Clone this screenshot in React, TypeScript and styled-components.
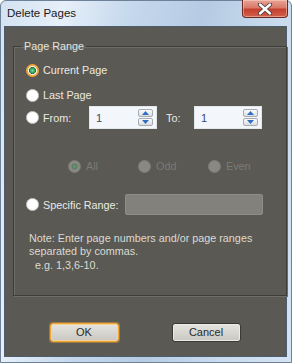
import { createGlobalStyle } from 'styled-components';
import styled from 'styled-components';

const GlobalStyle = createGlobalStyle`
  html, body {
    margin: 0;
    padding: 0;
    background: #ffffff;
  }
  #root {
    width: 292px;
    height: 363px;
  }
  * {
    box-sizing: border-box;
  }
`;

const App = () => {
  return (
    <Window>
      <GlobalStyle />
      <TitleBar>
        <Title>Delete Pages</Title>
        <CloseButton>
          <svg width="16" height="12" viewBox="0 0 16 12">
            <path d="M3 1.5 L13 10.5 M13 1.5 L3 10.5" stroke="#4a3a38" strokeWidth="4.2" strokeLinecap="round" />
            <path d="M3 1.5 L13 10.5 M13 1.5 L3 10.5" stroke="#ffffff" strokeWidth="2.4" strokeLinecap="round" />
          </svg>
        </CloseButton>
      </TitleBar>
      <Client>
        <Group>
          <Legend>Page Range</Legend>
          <Row $mt={9}>
            <Radio $checked $focus />
            <Label>Current Page</Label>
          </Row>
          <Row $mt={9}>
            <Radio />
            <Label>Last Page</Label>
          </Row>
          <FieldRow $mt={3}>
            <Radio />
            <Label $w={46}>From:</Label>
            <Spinner value="1" />
            <Label $w={28} $ml={9}>To:</Label>
            <Spinner value="1" />
          </FieldRow>
          <SubRow>
            <SubOption>
              <Radio $checked $disabled />
              <DimLabel>All</DimLabel>
            </SubOption>
            <SubOption>
              <Radio $disabled />
              <DimLabel>Odd</DimLabel>
            </SubOption>
            <SubOption>
              <Radio $disabled />
              <DimLabel>Even</DimLabel>
            </SubOption>
          </SubRow>
          <FieldRow $mt={19}>
            <Radio />
            <Label $w={82}>Specific Range:</Label>
            <RangeBox />
          </FieldRow>
          <Note>
            Note: Enter page numbers and/or page ranges
            <br />
            separated by commas.
            <br />
            &nbsp;&nbsp;e.g. 1,3,6-10.
          </Note>
        </Group>
        <ButtonRow>
          <Button $default>OK</Button>
          <Button>Cancel</Button>
        </ButtonRow>
      </Client>
    </Window>
  );
};

const Spinner = ({ value }: { value: string }) => (
  <SpinBox>
    <SpinValue>{value}</SpinValue>
    <SpinButtons>
      <SpinButton>
        <svg width="7" height="4" viewBox="0 0 7 4">
          <path d="M0 4 L3.5 0 L7 4 Z" fill="#2f6fc4" />
        </svg>
      </SpinButton>
      <SpinButton>
        <svg width="7" height="4" viewBox="0 0 7 4">
          <path d="M0 0 L3.5 4 L7 0 Z" fill="#2f6fc4" />
        </svg>
      </SpinButton>
    </SpinButtons>
  </SpinBox>
);

export default App;

const Window = styled.div`
  width: 292px;
  height: 363px;
  display: flex;
  flex-direction: column;
  border: 1px solid #6d8198;
  border-radius: 6px 6px 0 0;
  padding: 0 4px 5px 3px;
  background: linear-gradient(100deg, #d3e2f2 0%, #e6eff9 18%, #c4d7ec 38%, #b6cbe3 58%, #c9dbee 80%, #d4e3f3 100%);
  font-family: 'Liberation Sans', Arial, sans-serif;
`;

const TitleBar = styled.div`
  height: 25px;
  display: flex;
  align-items: flex-start;
  justify-content: space-between;
  flex-shrink: 0;
`;

const Title = styled.div`
  padding: 5px 0 0 3px;
  font-family: 'Liberation Sans', Arial, sans-serif;
  font-size: 11.5px;
  line-height: 15px;
  color: #1a1a1a;
`;

const CloseButton = styled.div`
  width: 46px;
  height: 18px;
  margin-top: -1px;
  margin-right: -1px;
  display: flex;
  align-items: center;
  justify-content: center;
  border: 1px solid #6a2a22;
  border-top: none;
  border-radius: 0 0 4px 4px;
  background: linear-gradient(#e9a595 0%, #d9796a 45%, #c4402f 55%, #d2614b 100%);
  box-shadow: inset 0 0 0 1px rgba(255, 220, 210, 0.45);
`;

const Client = styled.div`
  flex: 1;
  display: flex;
  flex-direction: column;
  border: 1px solid #4d5c6c;
  background: #5a5953;
  padding: 0 4px 0 8px;
`;

const Group = styled.fieldset`
  margin: 13px 0 0 0;
  padding: 0 8px 23px 12px;
  border: 1px solid #3e3d39;
  box-shadow: inset 1px 1px 0 #6e6d67, 1px 1px 0 #6e6d67;
  display: flex;
  flex-direction: column;
`;

const Legend = styled.legend`
  margin-left: -4px;
  padding: 0 2px;
  font-size: 10.8px;
  line-height: 13px;
  color: #e6e4dc;
`;

const Row = styled.div<{ $mt?: number }>`
  height: 16px;
  margin-top: ${(p) => p.$mt ?? 0}px;
  display: flex;
  align-items: center;
`;

const FieldRow = styled.div<{ $mt?: number }>`
  height: 23px;
  margin-top: ${(p) => p.$mt ?? 0}px;
  display: flex;
  align-items: center;
`;

const Radio = styled.span<{ $checked?: boolean; $disabled?: boolean; $focus?: boolean }>`
  width: 13px;
  height: 13px;
  flex-shrink: 0;
  border-radius: 50%;
  border: ${(p) => (p.$focus ? '2px solid #f2a43a' : p.$disabled ? '1px solid #7d7c77' : '1px solid #cfcfcf')};
  background: ${(p) =>
    p.$disabled
      ? p.$checked
        ? 'radial-gradient(circle, #6f9a7a 0, #52805f 2.5px, #7e8a80 3.2px, #8a8984 4px)'
        : '#898883'
      : p.$checked
      ? 'radial-gradient(circle, #79d99a 0, #2e9d56 2.6px, #1e6b3b 3.2px, #ffffff 3.8px)'
      : 'radial-gradient(circle at 50% 40%, #ffffff 55%, #ececec 100%)'};
`;

const Label = styled.span<{ $w?: number; $ml?: number }>`
  margin-left: ${(p) => p.$ml ?? 4}px;
  ${(p) => (p.$w ? `width: ${p.$w}px;` : '')}
  flex-shrink: 0;
  font-size: 10.8px;
  color: #ebe9e1;
  white-space: nowrap;
`;

const DimLabel = styled.span`
  margin-left: 5px;
  font-size: 10.8px;
  color: #7c7b75;
`;

const SubRow = styled.div`
  height: 16px;
  margin-top: 29px;
  padding-left: 42px;
  display: flex;
  align-items: center;
`;

const SubOption = styled.div`
  width: 70px;
  display: flex;
  align-items: center;
`;

const SpinBox = styled.div`
  width: 68px;
  height: 23px;
  flex-shrink: 0;
  display: flex;
  align-items: center;
  justify-content: space-between;
  background: #f3f6fb;
  border: 1px solid #e2e7ee;
  padding: 0 3px 0 6px;
`;

const SpinValue = styled.span`
  font-size: 11px;
  color: #3a4868;
`;

const SpinButtons = styled.div`
  display: flex;
  flex-direction: column;
  gap: 1px;
`;

const SpinButton = styled.div`
  width: 15px;
  height: 8px;
  display: flex;
  align-items: center;
  justify-content: center;
  border: 1px solid #a7acb3;
  border-radius: 2px;
  background: linear-gradient(#fbfbfb, #dcdde0);
`;

const RangeBox = styled.div`
  width: 138px;
  height: 21px;
  border: 1px solid #8e8d88;
  border-radius: 2px;
  background: #82817c;
`;

const Note = styled.div`
  margin: 16px 0 0 3px;
  font-size: 10.8px;
  line-height: 13.3px;
  color: #dcdad2;
`;

const ButtonRow = styled.div`
  margin-top: 27px;
  display: flex;
  justify-content: center;
  gap: 53px;
  padding-right: 5px;
`;

const Button = styled.div<{ $default?: boolean }>`
  width: 69px;
  height: 19px;
  display: flex;
  align-items: center;
  justify-content: center;
  border-radius: 3px;
  border: 1px solid ${(p) => (p.$default ? '#f0a432' : '#3a3935')};
  box-shadow: ${(p) => (p.$default ? '0 0 0 1px rgba(240,170,60,0.45), inset 0 0 0 1px #f7d39a' : 'inset 0 0 0 1px #ecebe6')};
  background: linear-gradient(#e6e4de, #c9c7c1);
  font-size: 11px;
  color: #2a2a2a;
`;
